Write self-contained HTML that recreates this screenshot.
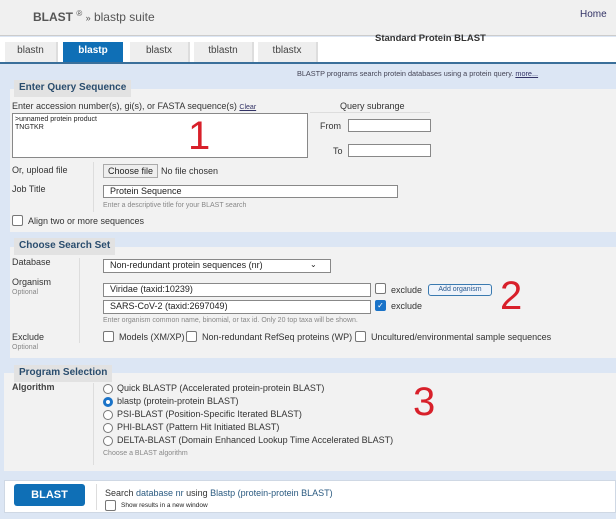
<!DOCTYPE html>
<html><head><style>
*{margin:0;padding:0;box-sizing:border-box}
body{width:616px;height:519px;overflow:hidden;font-family:"Liberation Sans",Arial,sans-serif;font-size:9px;color:#222;background:#dce6f4;position:relative}
.a{position:absolute;white-space:nowrap}
.box{position:absolute;background:#f2f2f2}
.hd{position:absolute;background:#e2e2e2;color:#2a4d6e;font-weight:bold;font-size:10px;padding:2px 5px 0 5px;height:17px;white-space:nowrap}
.inp{position:absolute;background:#fff;border:1px solid #888;white-space:nowrap}
.cb{position:absolute;width:11px;height:11px;border:1px solid #777;border-radius:2px;background:#fff}
.rd{position:absolute;width:10px;height:10px;border:1px solid #777;border-radius:50%;background:#fff}
.lbl{font-size:9px;color:#333}
.opt{font-size:7px;color:#888}
.hint{font-size:7px;color:#888}
.vl{position:absolute;width:1px;background:#ddd}
.big{position:absolute;color:#d8202a;font-size:40px;line-height:40px}
.tab{position:absolute;top:42px;height:21px;background:#eee;font-size:10px;color:#444;text-align:center;line-height:18px;border-right:2px solid #ddd}
</style></head><body>
<div class="a" style="left:0;top:0;width:616px;height:36px;background:#f0f0f0;border-bottom:1px solid #ccc"></div>
<div class="a" style="left:33px;top:9px;font-size:12px;font-weight:bold;color:#555">BLAST <sup style="font-size:8px;font-weight:normal">®</sup> <span style="font-weight:normal;font-size:9px">»</span> <span style="font-weight:normal">blastp suite</span></div>
<div class="a" style="left:580px;top:9px;font-size:10px;color:#336">Home</div>
<div class="a" style="left:0;top:37px;width:616px;height:27px;background:#fff"></div>
<div class="a" style="left:375px;top:33px;font-size:9.5px;font-weight:bold;color:#333">Standard Protein BLAST</div>
<div class="tab" style="left:5px;width:53px">blastn</div>
<div class="tab" style="left:63px;width:60px;background:#0f6fb6;color:#fff;font-weight:bold;border:none">blastp</div>
<div class="tab" style="left:130px;width:60px">blastx</div>
<div class="tab" style="left:194px;width:60px">tblastn</div>
<div class="tab" style="left:258px;width:60px">tblastx</div>
<div class="a" style="left:0;top:62px;width:616px;height:2px;background:#3a6f9a"></div>
<div class="a" style="left:297px;top:69px;font-size:7.3px;color:#445">BLASTP programs search protein databases using a protein query. <u style="color:#336">more...</u></div>

<div class="box" style="left:10px;top:89px;width:606px;height:143px"></div>
<div class="hd" style="left:14px;top:80px">Enter Query Sequence</div>
<div class="a lbl" style="left:12px;top:101px">Enter accession number(s), gi(s), or FASTA sequence(s) <u style="font-size:7px;color:#336">Clear</u></div>
<div class="inp" style="left:12px;top:113px;width:296px;height:45px;font-size:7px;padding:2px;line-height:8px">&gt;unnamed protein product<br>TNGTKR</div>
<div class="big" style="left:188px;top:116px">1</div>
<div class="a lbl" style="left:340px;top:101px">Query subrange</div>
<div class="a" style="left:310px;top:112px;width:120px;height:1px;background:#ddd"></div>
<div class="a lbl" style="left:320px;top:121px">From</div>
<div class="inp" style="left:348px;top:119px;width:83px;height:13px"></div>
<div class="a lbl" style="left:333px;top:146px">To</div>
<div class="inp" style="left:348px;top:144px;width:83px;height:13px"></div>
<div class="vl" style="left:93px;top:162px;height:50px"></div>
<div class="a lbl" style="left:12px;top:165px">Or, upload file</div>
<div class="a" style="left:103px;top:164px;width:55px;height:14px;border:1px solid #aaa;background:#eee;font-size:9px;padding:1px 4px">Choose file</div>
<div class="a lbl" style="left:161px;top:166px">No file chosen</div>
<div class="a lbl" style="left:12px;top:184px">Job Title</div>
<div class="inp" style="left:103px;top:185px;width:295px;height:13px;font-size:9px;padding:0 6px">Protein Sequence</div>
<div class="a hint" style="left:103px;top:202px">Enter a descriptive title for your BLAST search</div>
<div class="cb" style="left:12px;top:215px"></div>
<div class="a lbl" style="left:28px;top:216px">Align two or more sequences</div>

<div class="box" style="left:10px;top:247px;width:606px;height:111px"></div>
<div class="hd" style="left:14px;top:238px">Choose Search Set</div>
<div class="vl" style="left:79px;top:258px;height:85px"></div>
<div class="a lbl" style="left:12px;top:257px">Database</div>
<div class="inp" style="left:103px;top:259px;width:228px;height:14px;font-size:9px;padding:0 6px">Non-redundant protein sequences (nr)<span style="position:absolute;left:206px;top:0;font-size:8px">&#8964;</span></div>
<div class="a lbl" style="left:12px;top:277px">Organism</div>
<div class="a opt" style="left:12px;top:289px">Optional</div>
<div class="inp" style="left:103px;top:283px;width:268px;height:14px;font-size:9px;padding:0 6px">Viridae (taxid:10239)</div>
<div class="cb" style="left:375px;top:283px"></div>
<div class="a lbl" style="left:391px;top:285px">exclude</div>
<div class="a" style="left:428px;top:284px;width:64px;height:12px;border:1px solid #3a7ab0;border-radius:3px;background:#eef3fa;color:#2a5a90;font-size:7px;text-align:center;line-height:10px">Add organism</div>
<div class="big" style="left:500px;top:276px">2</div>
<div class="inp" style="left:103px;top:300px;width:268px;height:14px;font-size:9px;padding:0 6px">SARS-CoV-2 (taxid:2697049)</div>
<div class="cb" style="left:375px;top:300px;background:#1a73c8;border-color:#1a73c8;color:#fff;font-size:8px;line-height:9px;text-align:center">✓</div>
<div class="a lbl" style="left:391px;top:301px">exclude</div>
<div class="a hint" style="left:103px;top:317px">Enter organism common name, binomial, or tax id. Only 20 top taxa will be shown.</div>
<div class="a lbl" style="left:12px;top:332px">Exclude</div>
<div class="a opt" style="left:12px;top:344px">Optional</div>
<div class="cb" style="left:103px;top:331px"></div>
<div class="a lbl" style="left:119px;top:332px">Models (XM/XP)</div>
<div class="cb" style="left:186px;top:331px"></div>
<div class="a lbl" style="left:202px;top:332px">Non-redundant RefSeq proteins (WP)</div>
<div class="cb" style="left:355px;top:331px"></div>
<div class="a lbl" style="left:371px;top:332px">Uncultured/environmental sample sequences</div>

<div class="box" style="left:4px;top:373px;width:612px;height:98px"></div>
<div class="hd" style="left:14px;top:365px">Program Selection</div>
<div class="vl" style="left:93px;top:383px;height:82px"></div>
<div class="a lbl" style="left:12px;top:382px;font-weight:bold;color:#444">Algorithm</div>
<div class="rd" style="left:103px;top:384px"></div><div class="a lbl" style="left:117px;top:383px">Quick BLASTP (Accelerated protein-protein BLAST)</div>
<div class="rd" style="left:103px;top:397px;border:3px solid #1a73c8"></div><div class="a lbl" style="left:117px;top:396px">blastp (protein-protein BLAST)</div>
<div class="rd" style="left:103px;top:410px"></div><div class="a lbl" style="left:117px;top:409px">PSI-BLAST (Position-Specific Iterated BLAST)</div>
<div class="rd" style="left:103px;top:423px"></div><div class="a lbl" style="left:117px;top:422px">PHI-BLAST (Pattern Hit Initiated BLAST)</div>
<div class="rd" style="left:103px;top:436px"></div><div class="a lbl" style="left:117px;top:435px">DELTA-BLAST (Domain Enhanced Lookup Time Accelerated BLAST)</div>
<div class="a hint" style="left:103px;top:450px">Choose a BLAST algorithm</div>
<div class="big" style="left:413px;top:382px">3</div>

<div class="a" style="left:4px;top:480px;width:612px;height:33px;background:#fff;border:1px solid #cfd8e4"></div>
<div class="a" style="left:14px;top:484px;width:71px;height:22px;background:#0f6fb6;border-radius:3px;color:#fff;font-weight:bold;font-size:11px;text-align:center;line-height:22px">BLAST</div>
<div class="vl" style="left:96px;top:484px;height:26px"></div>
<div class="a lbl" style="left:105px;top:488px">Search <span style="color:#2a5a80">database nr</span> using <span style="color:#2a5a80">Blastp (protein-protein BLAST)</span></div>
<div class="cb" style="left:105px;top:500px"></div>
<div class="a" style="left:121px;top:502px;font-size:6.5px">Show results in a new window</div>
</body></html>
